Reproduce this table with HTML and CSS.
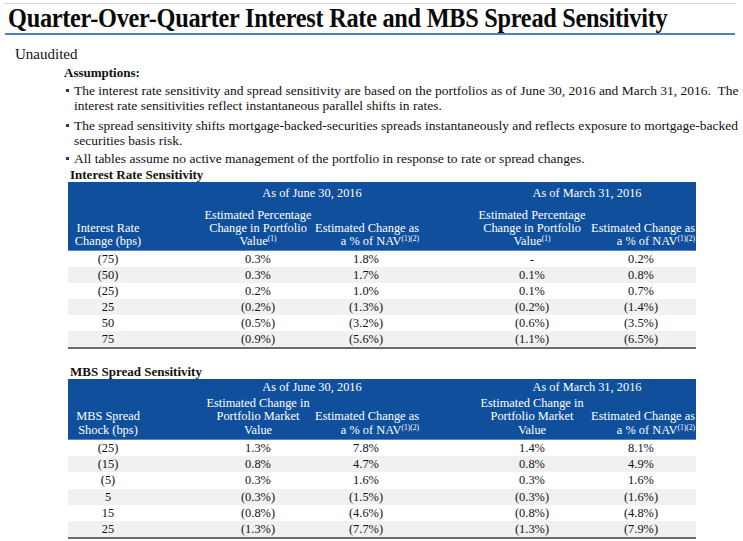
FILE: index.html
```html
<!DOCTYPE html>
<html>
<head>
<meta charset="utf-8">
<link rel="stylesheet" href="styles.css">
</head>
<body>
<div class="page">
  <div class="frame-top"></div>
  <h1 class="title"><span class="title-text">Quarter-Over-Quarter Interest Rate and MBS Spread Sensitivity</span></h1>
  <div class="rule"></div>
  <p class="unaudited">Unaudited</p>
  <div class="assump">
    <div class="assump-head">Assumptions:</div>
    <ul class="bullets">
      <li>The interest rate sensitivity and spread sensitivity are based on the portfolios as of June 30, 2016 and March 31, 2016.&nbsp; The interest rate sensitivities reflect instantaneous parallel shifts in rates.</li>
      <li>The spread sensitivity shifts mortgage-backed-securities spreads instantaneously and reflects exposure to mortgage-backed securities basis risk.</li>
      <li>All tables assume no active management of the portfolio in response to rate or spread changes.</li>
    </ul>
  </div>

  <section class="sens sens-ir">
    <div class="sens-title">Interest Rate Sensitivity</div>
    <table class="grid">
      <colgroup>
        <col class="w-c1"><col class="w-g1"><col class="w-c2"><col class="w-c3"><col class="w-g2"><col class="w-c4"><col class="w-c5">
      </colgroup>
      <thead>
        <tr class="grp">
          <th></th><th></th><th colspan="2">As of June 30, 2016</th><th></th><th colspan="2">As of March 31, 2016</th>
        </tr>
        <tr class="sub">
          <th>Interest Rate<br>Change (bps)</th><th></th>
          <th>Estimated Percentage<br>Change in Portfolio<br>Value<sup>(1)</sup></th>
          <th class="r">Estimated Change as<br>a % of NAV<sup>(1)(2)</sup></th>
          <th></th>
          <th>Estimated Percentage<br>Change in Portfolio<br>Value<sup>(1)</sup></th>
          <th class="r">Estimated Change as<br>a % of NAV<sup>(1)(2)</sup></th>
        </tr>
      </thead>
      <tbody>
        <tr><td>(75)</td><td></td><td>0.3%</td><td>1.8%</td><td></td><td>-</td><td>0.2%</td></tr>
        <tr><td>(50)</td><td></td><td>0.3%</td><td>1.7%</td><td></td><td>0.1%</td><td>0.8%</td></tr>
        <tr><td>(25)</td><td></td><td>0.2%</td><td>1.0%</td><td></td><td>0.1%</td><td>0.7%</td></tr>
        <tr><td>25</td><td></td><td>(0.2%)</td><td>(1.3%)</td><td></td><td>(0.2%)</td><td>(1.4%)</td></tr>
        <tr><td>50</td><td></td><td>(0.5%)</td><td>(3.2%)</td><td></td><td>(0.6%)</td><td>(3.5%)</td></tr>
        <tr><td>75</td><td></td><td>(0.9%)</td><td>(5.6%)</td><td></td><td>(1.1%)</td><td>(6.5%)</td></tr>
      </tbody>
    </table>
  </section>

  <section class="sens sens-mbs">
    <div class="sens-title">MBS Spread Sensitivity</div>
    <table class="grid">
      <colgroup>
        <col class="w-c1"><col class="w-g1"><col class="w-c2"><col class="w-c3"><col class="w-g2"><col class="w-c4"><col class="w-c5">
      </colgroup>
      <thead>
        <tr class="grp">
          <th></th><th></th><th colspan="2">As of June 30, 2016</th><th></th><th colspan="2">As of March 31, 2016</th>
        </tr>
        <tr class="sub">
          <th>MBS Spread<br>Shock (bps)</th><th></th>
          <th>Estimated Change in<br>Portfolio Market<br>Value</th>
          <th class="r">Estimated Change as<br>a % of NAV<sup>(1)(2)</sup></th>
          <th></th>
          <th>Estimated Change in<br>Portfolio Market<br>Value</th>
          <th class="r">Estimated Change as<br>a % of NAV<sup>(1)(2)</sup></th>
        </tr>
      </thead>
      <tbody>
        <tr><td>(25)</td><td></td><td>1.3%</td><td>7.8%</td><td></td><td>1.4%</td><td>8.1%</td></tr>
        <tr><td>(15)</td><td></td><td>0.8%</td><td>4.7%</td><td></td><td>0.8%</td><td>4.9%</td></tr>
        <tr><td>(5)</td><td></td><td>0.3%</td><td>1.6%</td><td></td><td>0.3%</td><td>1.6%</td></tr>
        <tr><td>5</td><td></td><td>(0.3%)</td><td>(1.5%)</td><td></td><td>(0.3%)</td><td>(1.6%)</td></tr>
        <tr><td>15</td><td></td><td>(0.8%)</td><td>(4.6%)</td><td></td><td>(0.8%)</td><td>(4.8%)</td></tr>
        <tr><td>25</td><td></td><td>(1.3%)</td><td>(7.7%)</td><td></td><td>(1.3%)</td><td>(7.9%)</td></tr>
      </tbody>
    </table>
  </section>
</div>
</body>
</html>
```

FILE: styles.css
```css
* { box-sizing: border-box; }
html, body {
  margin: 0;
  padding: 0;
  background: #ffffff;
}
body {
  width: 743px;
  height: 541px;
  overflow: hidden;
  font-family: "Liberation Serif", "Times New Roman", serif;
  color: #111111;
}
.page {
  width: 743px;
  padding-top: 3px;
}
.frame-top {
  height: 1px;
  margin: 0 7px 0 3px;
  background: #d6d6d6;
}
.title {
  margin: 0;
  padding-left: 8px;
  height: 29px;
  font-size: 27px;
  line-height: 29px;
  font-weight: bold;
  white-space: nowrap;
  color: #0a0a0a;
}
.title-text {
  display: inline-block;
  letter-spacing: -0.3px;
  transform: scaleX(0.9);
  transform-origin: 0 50%;
}
.rule {
  height: 2px;
  margin-left: 5px;
  width: 730px;
  background: #4f81bd;
}
.unaudited {
  margin: 11px 0 0 15px;
  font-size: 15px;
  line-height: 16px;
}
.assump {
  margin-left: 64px;
  margin-top: 3px;
}
.assump-head {
  font-size: 13px;
  line-height: 16px;
  font-weight: bold;
}
.bullets {
  list-style: none;
  margin: 2px 0 0 0;
  padding: 0 0 0 10px;
  width: 708px;
  font-size: 13.5px;
  line-height: 15px;
}
.bullets li {
  position: relative;
  margin-bottom: 5px;
}
.bullets li:nth-child(2) { margin-bottom: 3px; }
.bullets li:last-child { margin-bottom: 2px; }
.bullets li::before {
  content: "";
  position: absolute;
  left: -8px;
  top: 6px;
  width: 3px;
  height: 3px;
  background: #1f3a6e;
}
.sens-title {
  margin-left: 70px;
  font-size: 13px;
  line-height: 14px;
  font-weight: bold;
}
.sens-ir { margin-top: 0; }
.sens-mbs { margin-top: 16px; }
.grid {
  margin-left: 68px;
  width: 628px;
  border-collapse: collapse;
  table-layout: fixed;
  font-size: 12.4px;
}
.w-c1 { width: 80px; }
.w-g1 { width: 56px; }
.w-c2 { width: 108px; }
.w-c3 { width: 108px; }
.w-g2 { width: 58px; }
.w-c4 { width: 108px; }
.w-c5 { width: 110px; }
.grid th {
  background: #0f4f9c;
  color: #ffffff;
  font-weight: normal;
  text-align: center;
  padding: 0;
  white-space: nowrap;
}
.grid th.r { text-align: right; padding-right: 1px; }
.grid thead tr.grp th {
  height: 24px;
  vertical-align: middle;
  padding-bottom: 2px;
}
.grid thead tr.sub th {
  height: 44px;
  line-height: 13px;
  vertical-align: bottom;
  padding-bottom: 2px;
  border-bottom: 1px solid #5d86c6;
}
.sens-mbs .grid thead tr.grp th { height: 18px; padding-bottom: 0; }
.sens-mbs .grid thead tr.sub th { height: 43px; line-height: 13.5px; }
.grid sup {
  font-size: 7.5px;
  line-height: 0;
  vertical-align: 4px;
}
.grid td {
  height: 16px;
  padding: 0;
  line-height: 16px;
  text-align: center;
  color: #111111;
}
.sens-mbs .grid td { height: 16.3px; }
.grid tbody tr:nth-child(even) td { background: #f1f1f1; }
.grid tbody tr:last-child td { border-bottom: 2px solid #6b6b6b; }
```
